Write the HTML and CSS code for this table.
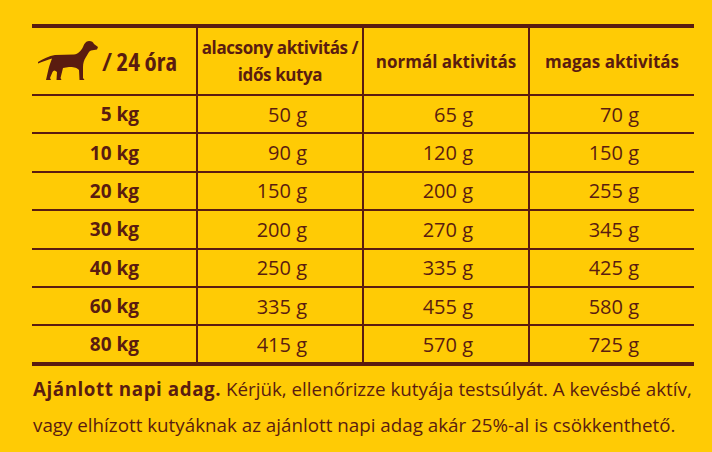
FILE: index.html
```html
<!DOCTYPE html>
<html lang="hu">
<head>
<meta charset="utf-8">
<title>Etetési táblázat</title>
<link rel="stylesheet" href="styles.css">
</head>
<body>
<div class="page">
  <table class="feed">
    <colgroup>
      <col class="c1"><col class="c2"><col class="c3"><col class="c4">
    </colgroup>
    <thead>
      <tr class="head">
        <th class="dogcell">
          <div class="dogwrap">
            <svg class="dog" viewBox="0 0 64 44" width="64" height="44" aria-hidden="true">
              <path d="M2,23 C7,20 13,17 19,16 L38,15.5 C42,15 45,12 47,8 C48,5 50,2 53,2 C56,2 57,3 58,5 L62,8 L61,10.5 C59,11 57,11 55,11.5 C53,12 52,15 50,18 C48,21 47,24 47,28 L47,39 L48.5,41 L43.5,41 L43,31 C40,28 37,28 33,28 L27,29 L24.5,39 L25.5,41 L20.5,41 L21,33 C19,31 17.5,31 16.5,33 L14,39 L15,41 L10,41 L12.5,30 C13.5,26 15,22 16,19.5 C12,20.5 7,22.5 2,24.5 Z"/>
            </svg>
            <span class="per">/ 24 óra</span>
          </div>
        </th>
        <th class="tight">alacsony aktivitás /<br>idős kutya</th>
        <th>normál aktivitás</th>
        <th>magas aktivitás</th>
      </tr>
    </thead>
    <tbody>
      <tr><th>5 kg</th><td>50 g</td><td>65 g</td><td>70 g</td></tr>
      <tr><th>10 kg</th><td>90 g</td><td>120 g</td><td>150 g</td></tr>
      <tr><th>20 kg</th><td>150 g</td><td>200 g</td><td>255 g</td></tr>
      <tr><th>30 kg</th><td>200 g</td><td>270 g</td><td>345 g</td></tr>
      <tr><th>40 kg</th><td>250 g</td><td>335 g</td><td>425 g</td></tr>
      <tr><th>60 kg</th><td>335 g</td><td>455 g</td><td>580 g</td></tr>
      <tr><th>80 kg</th><td>415 g</td><td>570 g</td><td>725 g</td></tr>
    </tbody>
  </table>
  <p class="note"><strong>Ajánlott napi adag.</strong> Kérjük, ellenőrizze kutyája testsúlyát. A kevésbé aktív,<br>vagy elhízott kutyáknak az ajánlott napi adag akár 25%-al is csökkenthető.</p>
</div>
</body>
</html>
```

FILE: styles.css
```css
html, body {
  margin: 0;
  padding: 0;
  background: #ffcb05;
}
body {
  width: 712px;
  height: 452px;
  overflow: hidden;
  font-family: "Open Sans", "DejaVu Sans", sans-serif;
  font-stretch: 100%;
  color: #5a1c10;
}
.page {
  padding: 24px 18px 0 32px;
}
.feed {
  width: 662px;
  border-collapse: collapse;
  table-layout: fixed;
  border-top: 4px solid #5a1c10;
  border-bottom: 4px solid #5a1c10;
}
.c1 { width: 165px; }
.c2 { width: 166px; }
.c3 { width: 166px; }
.c4 { width: 165px; }
.feed th, .feed td {
  padding: 0;
  border-left: 2px solid #5a1c10;
}
.feed tr > :first-child {
  border-left: none;
}
.feed tbody tr {
  border-top: 2px solid #5a1c10;
  height: 38.4px;
}
.head {
  height: 69px;
}
.head th {
  font-size: 17px;
  font-weight: 700;
  line-height: 27px;
  text-align: center;
  white-space: nowrap;
}
.head th.tight {
  letter-spacing: -0.4px;
}
.dogwrap {
  display: flex;
  align-items: center;
  gap: 2px;
  padding-left: 4px;
}
.dog {
  fill: #5a1c10;
  display: block;
}
.head .per {
  font-size: 25px;
  font-weight: 700;
  font-stretch: 75%;
  letter-spacing: 0;
}
.feed tbody th {
  font-size: 19px;
  font-weight: 700;
  text-align: right;
  padding-right: 57px;
}
.feed tbody td {
  font-size: 20px;
  font-weight: 400;
  text-align: right;
  padding-right: 55px;
}
.note {
  margin: 5px 0 0 1px;
  font-size: 18.8px;
  line-height: 36px;
  white-space: nowrap;
}
.note strong {
  font-weight: 700;
  letter-spacing: 0.55px;
}
```
